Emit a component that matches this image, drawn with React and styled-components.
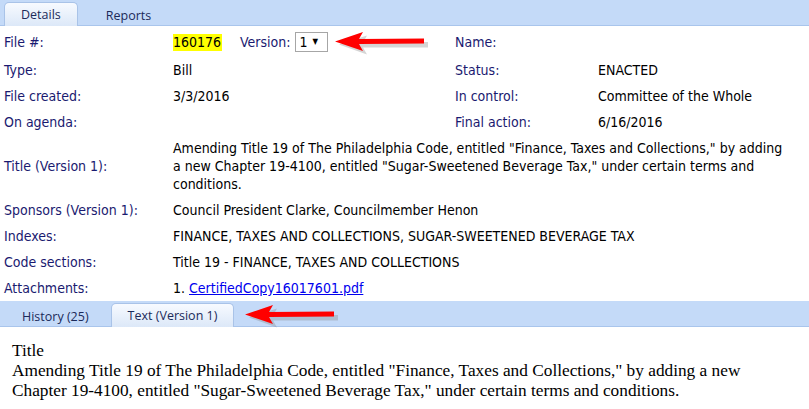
import React from "react";
import styled, { createGlobalStyle } from "styled-components";

const GlobalStyle = createGlobalStyle`
  html, body {
    margin: 0;
    padding: 0;
    background: #ffffff;
  }
`;

const rows = [
  { label: "Type:", value: "Bill", label2: "Status:", value2: "ENACTED" },
  { label: "File created:", value: "3/3/2016", label2: "In control:", value2: "Committee of the Whole" },
  { label: "On agenda:", value: "", label2: "Final action:", value2: "6/16/2016" },
];

const wideRows = [
  {
    label: "Title (Version 1):",
    value:
      'Amending Title 19 of The Philadelphia Code, entitled "Finance, Taxes and Collections," by adding a new Chapter 19-4100, entitled "Sugar-Sweetened Beverage Tax," under certain terms and conditions.',
  },
  { label: "Sponsors (Version 1):", value: "Council President Clarke, Councilmember Henon" },
  { label: "Indexes:", value: "FINANCE, TAXES AND COLLECTIONS, SUGAR-SWEETENED BEVERAGE TAX" },
  { label: "Code sections:", value: "Title 19 - FINANCE, TAXES AND COLLECTIONS" },
];

function Arrow() {
  return (
    <svg width="96" height="24" viewBox="0 0 96 24">
      <polygon points="3,11 31,2 27,9 92,8.5 92,14 27,14 31,21" fill="#888" opacity="0.35" transform="translate(2,2.5)" />
      <polygon points="1,10.5 29,1 25,8 90,7.5 90,12.5 25,13 29,20" fill="#ff0000" />
    </svg>
  );
}

export default function App() {
  return (
    <Page>
      <GlobalStyle />
      <TabStrip>
        <Tab active>Details</Tab>
        <Tab>Reports</Tab>
      </TabStrip>

      <DetailsGrid>
        <Label first>File #:</Label>
        <Value first>
          <FileRow>
            <Highlight>160176</Highlight>
            <VersionLabel>Version:</VersionLabel>
            <FakeSelect>
              1 <Caret>▼</Caret>
            </FakeSelect>
            <ArrowSlot>
              <Arrow />
            </ArrowSlot>
          </FileRow>
        </Value>
        <Label first>Name:</Label>
        <Value first />

        {rows.map((r) => (
          <React.Fragment key={r.label}>
            <Label>{r.label}</Label>
            <Value>{r.value}</Value>
            <Label>{r.label2}</Label>
            <Value>{r.value2}</Value>
          </React.Fragment>
        ))}

        {wideRows.map((r) => (
          <React.Fragment key={r.label}>
            <Label middle>{r.label}</Label>
            <Value wide>{r.value}</Value>
          </React.Fragment>
        ))}

        <Label>Attachments:</Label>
        <Value wide>
          1. <Link href="#">CertifiedCopy16017601.pdf</Link>
        </Value>
      </DetailsGrid>

      <TabStrip low>
        <Tab>History (25)</Tab>
        <Tab active>Text (Version 1)</Tab>
        <ArrowSlot low>
          <Arrow />
        </ArrowSlot>
      </TabStrip>

      <TextPanel>
        <div>Title</div>
        <div>
          Amending Title 19 of The Philadelphia Code, entitled "Finance, Taxes and Collections," by adding a new
          Chapter 19-4100, entitled "Sugar-Sweetened Beverage Tax," under certain terms and conditions.
        </div>
      </TextPanel>
    </Page>
  );
}

const Page = styled.div`
  width: 809px;
  height: 409px;
  overflow: hidden;
  background: #fff;
`;

const TabStrip = styled.div`
  display: flex;
  align-items: flex-end;
  height: 26px;
  padding-left: ${(p) => (p.low ? "0" : "4px")};
  background: #c4daf8;
  border-bottom: 1px solid #a9c5ec;
  box-sizing: border-box;
`;

const Tab = styled.div`
  height: ${(p) => (p.active ? "24px" : "22px")};
  padding: 0 ${(p) => (p.active ? "16px" : "21px")};
  margin-right: ${(p) => (p.active ? "6px" : "0")};
  display: flex;
  align-items: center;
  font-family: "Open Sans", "Noto Sans", sans-serif;
  font-size: 12.5px;
  color: #1b2a5a;
  border: 1px solid ${(p) => (p.active ? "#a9c3e8" : "transparent")};
  border-bottom: none;
  border-radius: 5px 5px 0 0;
  background: ${(p) =>
    p.active ? "linear-gradient(#f7faff, #dce8f8)" : "transparent"};
  box-sizing: border-box;
  margin-bottom: -1px;
`;

const DetailsGrid = styled.div`
  display: grid;
  grid-template-columns: 169px 282px 143px 1fr;
  padding: 3px 0 0;
  font-family: "DejaVu Sans Condensed", "Liberation Sans", sans-serif;
  font-size: 14px;
  line-height: 18px;
`;

const Label = styled.div`
  padding: ${(p) => (p.first ? "4px 4px 6px" : "4px 4px")};
  color: #1a1a70;
  align-self: ${(p) => (p.middle ? "center" : "start")};
  white-space: nowrap;
`;

const Value = styled.div`
  padding: ${(p) => (p.first ? "4px 4px 6px" : p.wide ? "4px 24px 4px 4px" : "4px 4px")};
  color: #000;
  grid-column: ${(p) => (p.wide ? "2 / -1" : "auto")};
  min-height: 18px;
`;

const FileRow = styled.div`
  display: flex;
  align-items: center;
  height: 18px;
`;

const Highlight = styled.span`
  background: #ffff00;
  padding: 0 1px 0 0;
  line-height: 17px;
`;

const VersionLabel = styled.span`
  margin-left: 18px;
  color: #1a1a70;
`;

const FakeSelect = styled.span`
  margin-left: 4px;
  height: 20px;
  width: 33px;
  box-sizing: border-box;
  border: 1px solid #a6a6a6;
  padding-left: 4px;
  display: flex;
  align-items: center;
  gap: 5px;
`;

const Caret = styled.span`
  font-size: 8px;
`;

const ArrowSlot = styled.span`
  display: flex;
  margin-left: ${(p) => (p.low ? "4px" : "6px")};
  align-self: center;
  margin-top: ${(p) => (p.low ? "4px" : "2px")};
`;

const Link = styled.a`
  color: #0000ee;
  text-decoration: underline;
`;

const TextPanel = styled.div`
  padding: 14px 12px;
  font-family: "Liberation Serif", serif;
  font-size: 17.3px;
  line-height: 20px;
  color: #000;
`;
